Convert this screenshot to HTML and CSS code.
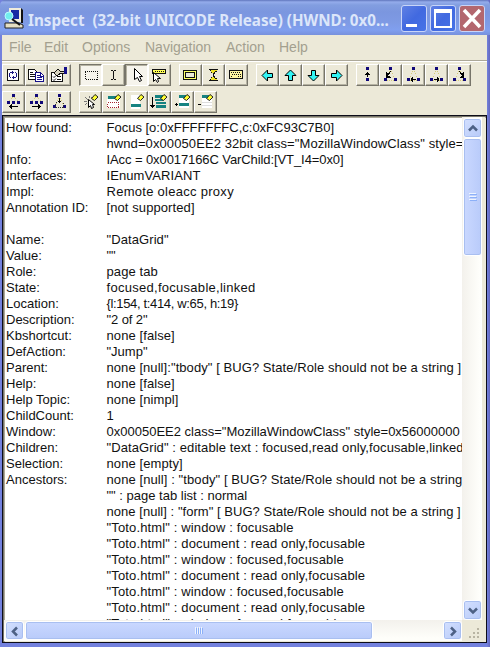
FILE: index.html
```html
<!DOCTYPE html>
<html lang="en">
<head>
<meta charset="utf-8">
<title>Inspect</title>
<link rel="stylesheet" href="styles.css">
</head>
<body>
<svg class="defs" aria-hidden="true">
  <symbol id="tri" viewBox="0 0 23 22"><path d="M11 7L7 15M12 7l4 8M8 16h8" fill="none" stroke="#d5cb78" stroke-dasharray="1 1"/><path d="M10 3h3v3h-3zM5 14h3v3H5zM15 14h3v3h-3z" fill="#100879"/></symbol>
  <symbol id="peak" viewBox="0 0 23 22"><path d="M11 6L7 10M12 6l4 4" fill="none" stroke="#d5cb78" stroke-dasharray="1 1"/><path d="M10 3h3v3h-3zM5 10h3v3H5zM10 10h3v3h-3zM15 10h3v3h-3z" fill="#100879"/></symbol>
  <symbol id="pen" viewBox="0 0 23 22"><path d="M12.500 7.500l3.500-4 3 2.500-3.500 3.500z" fill="#ffff32" stroke="#222" shape-rendering="auto"/></symbol>
  <symbol id="cursor" viewBox="0 0 23 22"><path d="M9.500 4.500v11l3-2 2 4 2-1-2-4h3z" fill="#fff" stroke="#000" shape-rendering="auto"/></symbol>
  <symbol id="arrow" viewBox="0 0 23 22"><path d="M6 11.500l5.500-5.500v3.500h5v4h-5V17z" fill="#32f4f4" stroke="#000" shape-rendering="auto"/></symbol>
</svg>
<div class="window">
  <header class="title">
    <svg class="appicon" viewBox="0 0 20 22"><path d="M5 1h12v14H5z" fill="#f0eddc"/><path d="M17 1l2 2v13h-2z" fill="#111"/><path d="M7 3h8v9H7z" fill="#152ca4"/><path d="M1 16h14l4 2v3H1z" fill="#e6dfc3" stroke="#222"/><circle cx="5" cy="9" r="4" fill="#72eeee" stroke="#b8fcff"/><path d="M8 12l8 6" stroke="#111" stroke-width="2"/></svg>
    <span class="caption">Inspect&nbsp; (32-bit UNICODE Release) (HWND: 0x0...</span>
    <div class="controls">
      <b class="ctl"><svg viewBox="0 0 26 27"><path d="M5 19h11v3H5z" fill="#fff"/></svg></b>
      <b class="ctl"><svg viewBox="0 0 26 27"><path d="M4 4h18v19H4zM6 8v13h14V8z" fill="#fff" fill-rule="evenodd"/></svg></b>
      <b class="ctl close"><svg viewBox="0 0 26 27"><path d="M5 5l16 17M21 5L5 22" stroke="#fff" stroke-width="3.500"/></svg></b>
    </div>
  </header>
  <nav class="menu"><span class="m1">File</span><span class="m2">Edit</span><span class="m3">Options</span><span class="m4">Navigation</span><span class="m5">Action</span><span class="m6">Help</span></nav>
  <div class="toolbar">
    <div class="row">
      <div class="group">
        <i class="btn"><svg viewBox="0 0 23 22"><path d="M5.500 5.500h11v11h-11z" fill="#fff" stroke="#111"/><path d="M7 9h1v4H7zM8 8h2v1H8zM8 13h1v1H8zM10 7h1v3h-1zM11 8h1v1h-1zM14 9h1v4h-1zM13 8h1v1h-1zM12 13h2v1h-2zM11 12h1v3h-1zM10 13h1v1h-1z" fill="#1c1882"/></svg></i>
        <i class="btn"><svg viewBox="0 0 23 22"><path d="M3.500 5.500h6l2 2v8h-8z" fill="#fff" stroke="#111"/><path d="M5 8.500h3M5 10.500h5M5 12.500h5" stroke="#111"/><path d="M10.500 8.500h5l3 3v6h-8z" fill="#fff" stroke="#15108a"/><path d="M12 11.500h3M12 13.500h5M12 15.500h5M15.500 9v3h3" fill="none" stroke="#15108a"/></svg></i>
        <i class="btn"><svg viewBox="0 0 23 22"><path d="M3.500 8.500h11v9h-11z" fill="#fff" stroke="#111"/><path d="M5 12.500l1 1 2-2M9 12.500h4M5 15.500l1 1 2-2M9 15.500h4" fill="none" stroke="#111" shape-rendering="auto"/><path d="M6 9l4-4 2 2h4v2h-3l-4 3z" fill="#d8d4c0" stroke="#111"/><path d="M16 3h3v7h-3z" fill="#15108a"/></svg></i>
      </div>
      <div class="group">
        <i class="btn down"><svg viewBox="0 0 23 22"><rect x="6.500" y="7.500" width="12" height="8" rx="1" fill="none" stroke="#111" stroke-dasharray="1 1"/></svg></i>
        <i class="btn"><svg viewBox="0 0 23 22"><path d="M9 6.500h2M12 6.500h2M11.500 7v8M9 15.500h2M12 15.500h2" stroke="#111"/></svg></i>
        <i class="btn down"><svg viewBox="0 0 23 22"><use href="#cursor"/></svg></i>
        <i class="btn"><svg viewBox="0 0 23 22"><path d="M4.500 5.500h13v4h-13z" fill="#ffff56" stroke="#111"/><path d="M7 7.500h9" stroke="#111" stroke-dasharray="1 1"/><path d="M5.500 8.500v9l2-2 2 3 1-1-1-3h3z" fill="#fff" stroke="#000" shape-rendering="auto"/></svg></i>
      </div>
      <div class="group">
        <i class="btn"><svg viewBox="0 0 23 22"><path d="M4.500 6.500h13v9h-13z" fill="#ffff65" stroke="#111"/><path d="M6.500 8.500h9v5h-9z" fill="#ece9d8" stroke="#111"/></svg></i>
        <i class="btn"><svg viewBox="0 0 23 22"><path d="M7 5.500h9M7 16.500h9" stroke="#111"/><path d="M8 6h7l-3.500 4zM8 16h7l-3.500-4z" fill="#eee326"/><path d="M8 6.500l3.500 3.500L15 6.500M8 15.500l3.500-3.500 3.500 3.500" fill="none" stroke="#111" stroke-dasharray="1 1"/></svg></i>
        <i class="btn"><svg viewBox="0 0 23 22"><path d="M4.500 6.500h13v8h-13z" fill="#fff5a0" stroke="#111"/><path d="M6 8.500h10M7 10.500h9M6 12.500h2M13 12.500h3" stroke="#111" stroke-dasharray="1 1"/></svg></i>
      </div>
      <div class="group">
        <i class="btn"><svg viewBox="0 0 23 22"><use href="#arrow"/></svg></i>
        <i class="btn"><svg viewBox="0 0 23 22"><use href="#arrow" transform="rotate(90 11.500 11.500)"/></svg></i>
        <i class="btn"><svg viewBox="0 0 23 22"><use href="#arrow" transform="rotate(-90 11.500 11.500)"/></svg></i>
        <i class="btn"><svg viewBox="0 0 23 22"><use href="#arrow" transform="rotate(180 11.500 11.500)"/></svg></i>
      </div>
      <div class="group">
        <i class="btn"><svg viewBox="0 0 23 22"><path d="M10 3h3v3h-3zM10 14h3v3h-3z" fill="#100879"/><path d="M11.500 13V8M9 10.500h5M10 9.500h3" stroke="#000"/></svg></i>
        <i class="btn"><svg viewBox="0 0 23 22"><use href="#tri"/><path d="M11.500 7l-3 5M7.500 8v5h4M8.500 9v3h2" fill="none" stroke="#000"/></svg></i>
        <i class="btn"><svg viewBox="0 0 23 22"><use href="#tri"/><path d="M9 15.500h5M10.500 13v5M9.500 14v3" stroke="#000"/></svg></i>
        <i class="btn"><svg viewBox="0 0 23 22"><use href="#tri"/><path d="M9 15.500h5M12.500 13v5M13.500 14v3" stroke="#000"/></svg></i>
        <i class="btn"><svg viewBox="0 0 23 22"><use href="#tri"/><path d="M11.500 7l3 5M15.500 8v5h-4M14.500 9v3h-2" fill="none" stroke="#000"/></svg></i>
      </div>
    </div>
    <div class="row">
      <div class="group">
        <i class="btn"><svg viewBox="0 0 23 22"><use href="#peak"/><path d="M7 15.500h9M9.500 13v5M8.500 14v3" stroke="#000"/></svg></i>
        <i class="btn"><svg viewBox="0 0 23 22"><use href="#peak"/><path d="M7 15.500h9M13.500 13v5M14.500 14v3" stroke="#000"/></svg></i>
        <i class="btn"><svg viewBox="0 0 23 22"><use href="#tri"/><path d="M8.500 11.500h-1v5h8v-5h-1" fill="none" stroke="#333" stroke-dasharray="1 1"/><path d="M11.500 7v5M10 10.500h3" stroke="#000"/></svg></i>
      </div>
      <div class="group">
        <i class="btn"><svg viewBox="0 0 23 22"><path d="M6 6l3 3M10 5v2M5 10h3M12 7l2-1M6 14l2-2" stroke="#777"/><path d="M9.500 8.500v8l2-2 1 3 2-1-1-3h2z" fill="#fff" stroke="#000" shape-rendering="auto"/><use href="#pen"/></svg></i>
        <i class="btn"><svg viewBox="0 0 23 22"><path d="M5 8h13v9H5z" fill="#fff"/><path d="M6 5h9v3H6z" fill="#168381"/><path d="M5.500 11.500h11v5h-11z" fill="none" stroke="#a72630" stroke-dasharray="1 1"/><use href="#pen"/></svg></i>
        <i class="btn"><svg viewBox="0 0 23 22"><path d="M6 4h9v14H6z" fill="#fff"/><path d="M6 13h10v3H6z" fill="#168381"/><use href="#pen"/></svg></i>
        <i class="btn"><svg viewBox="0 0 23 22"><path d="M7 4h8v3H7zM7 8h8v2H7zM8 11h10v2H8zM8 14h10v3H8z" fill="#168381"/><path d="M4.500 6v11M2 14.500h5M3 15.500h3" stroke="#000"/><use href="#pen"/></svg></i>
        <i class="btn"><svg viewBox="0 0 23 22"><path d="M8 5h10v12H8z" fill="#fff"/><path d="M8 4h8v3H8zM8 12h10v3H8z" fill="#168381"/><path d="M4 13.500h3M5.500 12v3" stroke="#000"/><use href="#pen"/></svg></i>
        <i class="btn"><svg viewBox="0 0 23 22"><path d="M8 5h10v12H8z" fill="#fff"/><path d="M8 4h8v3H8z" fill="#168381"/><path d="M8 11.500h10M8 14.500h10" stroke="#ddd"/><path d="M4 13.500h3" stroke="#000"/><use href="#pen"/></svg></i>
      </div>
    </div>
  </div>
  <main class="pane">
    <dl class="list">
      <dt>How found:</dt><dd>Focus [o:0xFFFFFFFC,c:0xFC93C7B0]</dd>
      <dt></dt><dd class="hwnd">hwnd=0x00050EE2 32bit class="MozillaWindowClass" style=</dd>
      <dt>Info:</dt><dd class="tight">IAcc = 0x0017166C VarChild:[VT_I4=0x0]</dd>
      <dt>Interfaces:</dt><dd class="wide">IEnumVARIANT</dd>
      <dt>Impl:</dt><dd class="wider">Remote oleacc proxy</dd>
      <dt>Annotation ID:</dt><dd class="wide">[not supported]</dd>
      <dt></dt><dd></dd>
      <dt>Name:</dt><dd class="wide">"DataGrid"</dd>
      <dt>Value:</dt><dd>""</dd>
      <dt>Role:</dt><dd class="wide">page tab</dd>
      <dt>State:</dt><dd class="wider">focused,focusable,linked</dd>
      <dt>Location:</dt><dd class="tighter">{l:154, t:414, w:65, h:19}</dd>
      <dt>Description:</dt><dd class="tight">"2 of 2"</dd>
      <dt>Kbshortcut:</dt><dd class="wide">none [false]</dd>
      <dt>DefAction:</dt><dd>"Jump"</dd>
      <dt>Parent:</dt><dd class="bug">none [null]:"tbody" [ BUG? State/Role should not be a string ]</dd>
      <dt>Help:</dt><dd class="wide">none [false]</dd>
      <dt>Help Topic:</dt><dd class="wide">none [nimpl]</dd>
      <dt>ChildCount:</dt><dd>1</dd>
      <dt>Window:</dt><dd>0x00050EE2 class="MozillaWindowClass" style=0x56000000</dd>
      <dt>Children:</dt><dd class="wide">"DataGrid" : editable text : focused,read only,focusable,linked</dd>
      <dt>Selection:</dt><dd class="wide">none [empty]</dd>
      <dt>Ancestors:</dt><dd class="wide">none [null] : "tbody" [ BUG? State/Role should not be a string</dd>
      <dt></dt><dd>"" : page tab list : normal</dd>
      <dt></dt><dd class="form">none [null] : "form" [ BUG? State/Role should not be a string ]</dd>
      <dt></dt><dd class="toto">"Toto.html" : window : focusable</dd>
      <dt></dt><dd class="toto">"Toto.html" : document : read only,focusable</dd>
      <dt></dt><dd class="toto">"Toto.html" : window : focused,focusable</dd>
      <dt></dt><dd class="toto">"Toto.html" : document : read only,focusable</dd>
      <dt></dt><dd class="toto">"Toto.html" : window : focused,focusable</dd>
      <dt></dt><dd class="toto">"Toto.html" : document : read only,focusable</dd>
      <dt></dt><dd class="toto">"Toto.html" : window : focused,focusable</dd>
    </dl>
    <div class="vbar">
      <div class="sb"><svg viewBox="0 0 18 19"><path d="M5 11.500l4-4 4 4" fill="none" stroke="#4d6185" stroke-width="2.500"/></svg></div>
      <div class="thumb vthumb"><svg viewBox="0 0 8 9"><path d="M0 .5h7M0 3.500h7M0 6.500h7" stroke="#eef4fe"/><path d="M1 1.500h7M1 4.500h7M1 7.500h7" stroke="#8cb0f8"/></svg></div>
      <div class="track"></div>
      <div class="sb"><svg viewBox="0 0 18 19"><path d="M5 7.500l4 4 4-4" fill="none" stroke="#4d6185" stroke-width="2.500"/></svg></div>
    </div>
    <div class="hbar">
      <div class="sb"><svg viewBox="0 0 18 19"><path d="M11 5.500l-4 4 4 4" fill="none" stroke="#4d6185" stroke-width="2.500"/></svg></div>
      <div class="thumb hthumb"><svg viewBox="0 0 9 8"><path d="M.5 0v7M2.500 0v7M4.500 0v7M6.500 0v7" stroke="#eef4fe"/><path d="M1.500 1v6M3.500 1v6M5.500 1v6M7.500 1v6" stroke="#8cb0f8"/></svg></div>
      <div class="track"></div>
      <div class="sb"><svg viewBox="0 0 18 19"><path d="M7 5.500l4 4-4 4" fill="none" stroke="#4d6185" stroke-width="2.500"/></svg></div>
    </div>
    <div class="grip"><svg viewBox="0 0 23 21"><path d="M15 8h2v2h-2zM11 12h2v2h-2zM15 12h2v2h-2zM7 16h2v2H7zM11 16h2v2h-2zM15 16h2v2h-2z" fill="#b8b4a2"/></svg></div>
  </main>
</div>
</body>
</html>
```
FILE: styles.css
```css
* { box-sizing: border-box; }
body { margin: 0; overflow: hidden; background: #6f78d2; }
.defs { display: none; }
svg { display: block; }
.window { width: 490px; height: 647px; padding: 0 3px 4px 2px; display: flex; flex-direction: column; background: linear-gradient(90deg, #7381dd 0, #7381dd 486px, #7381dd 487px, #6468bd 490px); font-family: "Liberation Sans", Arial, sans-serif; }
.title { height: 35px; flex: none; margin: 0 -3px 0 -2px; padding: 0 5px 0 4px; display: flex; align-items: center; background: linear-gradient(#6076bd 0, #94aceb 2px, #829ee0 5px, #7b96df 12px, #7e9ae4 22px, #809fef 30px, #7891dd 35px); border-radius: 5px 5px 0 0; }
.appicon { width: 20px; height: 22px; flex: none; }
.caption { flex: 1; min-width: 0; margin: 4px 0 0 4px; white-space: nowrap; font: bold 15.200px "Noto Sans", sans-serif; color: #dce6fa; line-height: 22px; }
.controls { display: flex; flex: none; gap: 3px; margin-top: 2px; }
.ctl { width: 26px; height: 27px; flex: none; border: 1px solid #c9d5f8; border-radius: 3px; background: linear-gradient(135deg, #5f80e4, #4169e0 50%, #4773e7); }
.ctl svg { width: 26px; height: 27px; margin: -1px; }
.close { background: #b3676f; }
.menu { height: 26px; flex: none; display: flex; padding-left: 7px; background: #ece9d8; border-bottom: 1px solid #aca899; color: #a3a08f; font-size: 14px; line-height: 24px; }
.menu span { white-space: nowrap; }
.m1 { width: 35px; } .m2 { width: 38px; } .m3 { width: 63px; } .m4 { width: 81px; } .m5 { width: 53px; }
.toolbar { height: 54px; flex: none; padding-top: 2px; background: #ece9d8; border-top: 1px solid #fff; display: flex; flex-direction: column; gap: 5px; }
.row, .group { display: flex; }
.row { gap: 8px; height: 22px; }
.btn { width: 23px; height: 22px; border: 1px solid; border-color: #fff #77756a #77756a #fff; box-shadow: inset -1px -1px #b5b2a2; background: #ece9d8; }
.btn svg { width: 23px; height: 22px; margin: -1px; shape-rendering: crispEdges; }
.down { background: #f6f4ec; border-color: #77756a #fff #fff #77756a; box-shadow: inset 1px 1px #b5b2a2; }
.pane { flex: 1; display: grid; grid-template: 503px 21px / 458px 23px; padding: 1px 0 0 1px; border: 1px solid #0c0c18; box-shadow: inset 1px 1px #77756a, inset 2px 2px #aca899; background: #ece9d8; }
.list { margin: 1px 0 0 1px; padding: 2px 0 0 1px; display: grid; grid-template-columns: 100.500px 1fr; grid-auto-rows: 16px; overflow: hidden; background: #fff; color: #111; font-size: 13px; line-height: 16px; white-space: nowrap; }
dt, dd { margin: 0; }
.hwnd { letter-spacing: .09px; }
.form { letter-spacing: .04px; }
.bug { letter-spacing: .07px; }
.wide { letter-spacing: .09px; }
.wider { letter-spacing: .28px; }
.toto { letter-spacing: .14px; }
.tight { letter-spacing: -.09px; }
.tighter { letter-spacing: -.34px; }
.vbar { display: flex; flex-direction: column; padding: 1px 4px 0 1px; background: linear-gradient(90deg, #f3f1ec, #fefefa 17px, #fff 20px, #ece9d8 20px); }
.hbar { display: flex; padding: 1px 0 1px 1px; background: linear-gradient(#f3f1ec, #fefefa 18px); }
.sb, .thumb { border: 1px solid #fff; border-radius: 3px; background: linear-gradient(135deg, #d4e0ff, #b7caf8); box-shadow: inset 0 0 0 1px #a9bff0; }
.sb { width: 19px; height: 20px; flex: none; }
.sb svg { width: 18px; height: 19px; }
.hbar .sb { height: 19px; }
.thumb { flex: none; display: grid; place-items: center; background: #bfd0fc; }
.vthumb { width: 19px; height: 118px; background: linear-gradient(90deg, #cad8ff, #b9cbfa); }
.hthumb { width: 348px; height: 19px; margin-left: 1px; background: linear-gradient(#cad8ff, #b9cbfa); }
.vthumb svg { width: 8px; height: 9px; }
.hthumb svg { width: 9px; height: 8px; }
.track { flex: 1; }
.grip svg { width: 23px; height: 21px; }
```
